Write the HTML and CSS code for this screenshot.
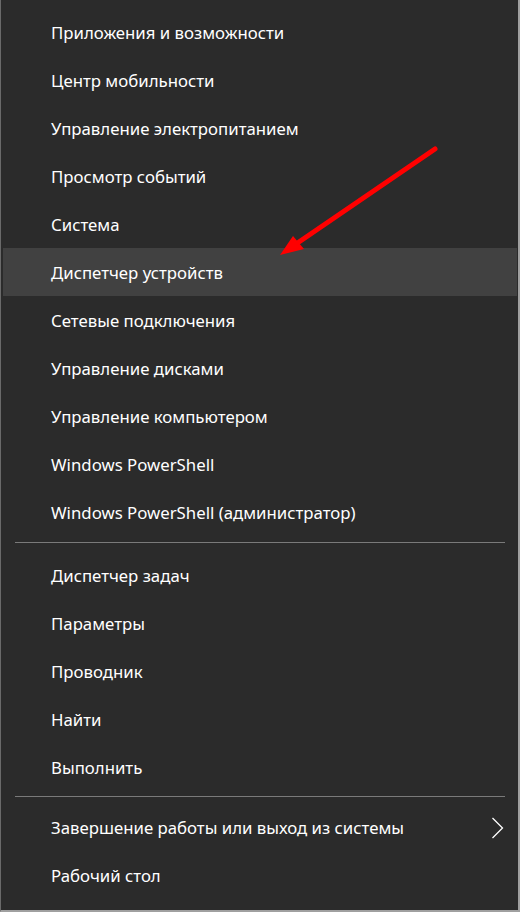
FILE: index.html
```html
<!DOCTYPE html>
<html lang="ru">
<head>
<meta charset="utf-8">
<link rel="stylesheet" href="styles.css">
</head>
<body>
<div class="menu">
  <div class="group">
    <div class="item">Приложения и возможности</div>
    <div class="item">Центр мобильности</div>
    <div class="item">Управление электропитанием</div>
    <div class="item">Просмотр событий</div>
    <div class="item">Система</div>
    <div class="item active">Диспетчер устройств</div>
    <div class="item">Сетевые подключения</div>
    <div class="item">Управление дисками</div>
    <div class="item">Управление компьютером</div>
    <div class="item">Windows PowerShell</div>
    <div class="item">Windows PowerShell (администратор)</div>
  </div>
  <div class="sep"></div>
  <div class="group">
    <div class="item">Диспетчер задач</div>
    <div class="item">Параметры</div>
    <div class="item">Проводник</div>
    <div class="item">Найти</div>
    <div class="item">Выполнить</div>
  </div>
  <div class="sep sep-tight"></div>
  <div class="group">
    <div class="item sub">Завершение работы или выход из системы
      <svg class="chev" width="14" height="22" viewBox="0 0 14 22"><path d="M1.5 1 L11.5 11 L1.5 21" fill="none" stroke="#ffffff" stroke-width="1.3"/></svg>
    </div>
    <div class="item">Рабочий стол</div>
  </div>
  <svg class="arrow" width="520" height="912" viewBox="0 0 520 912">
    <line x1="435" y1="149" x2="296" y2="244" stroke="#ff0000" stroke-width="5" stroke-linecap="round"/>
    <polygon points="280,255 293,236 304,249" fill="#ff0000"/>
  </svg>
</div>
</body>
</html>
```
FILE: styles.css
```css
html, body {
  margin: 0;
  padding: 0;
  background: #2b2b2b;
}
.menu {
  position: relative;
  box-sizing: border-box;
  width: 520px;
  height: 912px;
  background: #2b2b2b;
  border-left: 1px solid #6a6a6a;
  border-right: 2px solid #a0a0a0;
  border-bottom: 2px solid #a0a0a0;
  padding-top: 8px;
  font-family: "Noto Sans", "Open Sans", sans-serif;
  font-size: 16.8px;
  color: #ffffff;
}
.item {
  height: 48px;
  display: flex;
  align-items: center;
  margin: 0 1px 0 2px;
  padding-left: 48px;
  padding-top: 1px;
  box-sizing: border-box;
}
.item.active {
  background: #414141;
}
.item.sub {
  justify-content: space-between;
  padding-right: 12px;
}
.chev {
  display: block;
}
.sep {
  height: 1px;
  background: #7a7a7a;
  margin: 6px 13px 8px 14px;
}
.sep.sep-tight {
  margin-top: 5px;
  margin-bottom: 6px;
}
.arrow {
  position: absolute;
  left: -1px;
  top: 0;
  pointer-events: none;
}
```
